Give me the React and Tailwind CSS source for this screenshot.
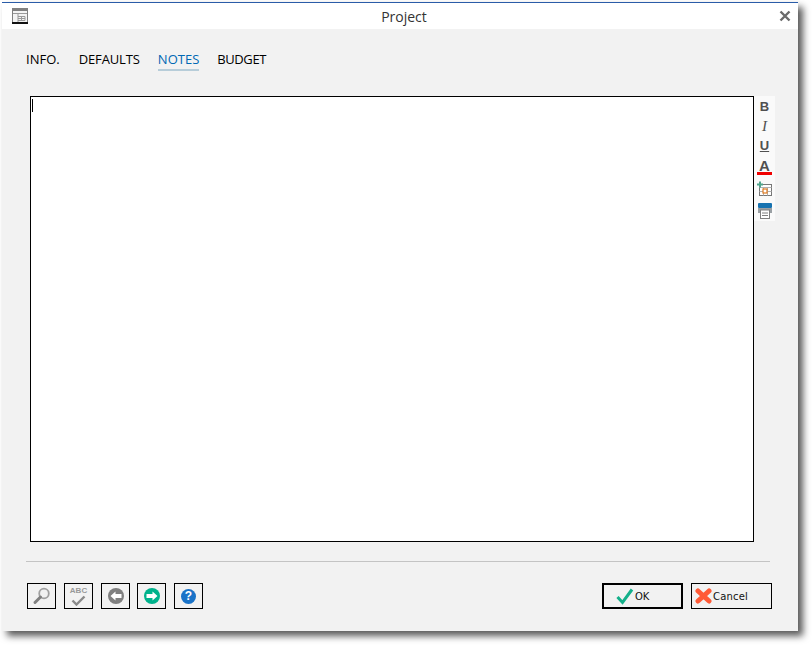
import React from "react";

const tabs = [
  { label: "INFO.", className: "mr-px" },
  { label: "DEFAULTS", className: "tracking-[-0.12px]" },
  { label: "NOTES", className: "text-[#0068b4] h-[21px] border-b-2 border-[#b7cdd9]" },
  { label: "BUDGET", className: "tracking-[-0.4px]" },
];

const SmallButton = ({ children, className = "" }) => (
  <button className={`w-[29px] h-[26px] border border-black flex items-center justify-center ${className}`}>
    {children}
  </button>
);

const WindowIcon = () => (
  <svg width="16" height="16" viewBox="0 0 16 16" className="block">
    <rect width="16" height="16" fill="#808080" />
    <rect y="14" width="16" height="2" fill="#111" />
    <rect x="1" y="3" width="14" height="11" fill="#f4f4f4" />
    <path d="M1 5.5h14M6 5.5V14M6 8.5h7v4H6M6 10.5h7M9.5 8.5v4" stroke="#9a9a9a" fill="none" />
  </svg>
);

const App = () => {
  return (
    <div className="w-[812px] h-[645px] bg-white pl-[2px] pt-[2px] font-['Open_Sans',sans-serif]">
      <div className="w-[796px] h-[629px] flex flex-col border-t border-[#2a5ca8] shadow-[5px_5px_7px_rgba(0,0,0,0.65)]">
        {/* title bar */}
        <div className="h-[26px] shrink-0 bg-white flex items-center pl-[10px] pr-[7px] relative">
          <WindowIcon />
          <span className="flex-1 text-center text-[14px] text-[#333] pl-[1px]">Project</span>
          <svg width="12" height="12" viewBox="0 0 12 12" className="block">
            <path d="M1.5 1.5l9 9M10.5 1.5l-9 9" stroke="#6b6b6b" strokeWidth="2.4" />
          </svg>
        </div>

        <div className="flex-1 bg-[#f2f2f2] flex flex-col pl-[24px] pr-[26px]">
          {/* tabs */}
          <div className="flex gap-[18px] pt-[21px] h-[67px] text-[13px] leading-[18px] text-black">
            {tabs.map((tab) => (
              <span key={tab.label} className={tab.className}>
                {tab.label}
              </span>
            ))}
          </div>

          {/* notes editor and format toolbar */}
          <div className="flex pl-[4px] h-[446px] -mr-[5px]">
            <div className="w-[724px] shrink-0 bg-white border border-black pl-[1px] pt-[2px]">
              <div className="w-px h-[13px] bg-black" />
            </div>
            <div className="w-[21px] shrink-0 h-[125px] bg-[#fafafa] flex flex-col items-center font-['Liberation_Sans',sans-serif] text-[#505050]">
              <span className="h-[20px] leading-[21px] text-[13px] font-bold">B</span>
              <span className="h-[20px] leading-[21px] text-[15px] italic font-['Liberation_Serif',serif]">I</span>
              <span className="h-[20px] leading-[20px] text-[13px] font-bold underline">U</span>
              <span className="h-[21px] relative leading-[20px] text-[15px] font-bold">
                A
                <span className="absolute left-[-2px] right-[-2px] bottom-[2px] h-[3px] bg-[#f00000]" />
              </span>
              <svg width="16" height="16" viewBox="0 0 16 16" className="block mt-[4px]">
                <rect x="2.5" y="3.5" width="12" height="11" fill="#fff" stroke="#777" />
                <path d="M2.5 6.5h12M6.5 6.5v8M10.5 6.5v8M2.5 10.5h12" stroke="#b0b0b0" />
                <rect x="6" y="8" width="4" height="4" fill="#fff" stroke="#e07b20" strokeWidth="1.2" />
                <path d="M3 0.5v6M0 3.5h6" stroke="#4fa58c" strokeWidth="2" />
              </svg>
              <svg width="16" height="17" viewBox="0 0 16 17" className="block mt-[5px]">
                <rect x="1" y="1" width="14" height="5" rx="1" fill="#1672b0" />
                <rect x="1" y="6" width="14" height="5" fill="#9aa0a4" />
                <rect x="3.5" y="8" width="9" height="8.5" fill="#fff" stroke="#808080" />
                <path d="M5 11h6M5 13.5h6" stroke="#808080" />
              </svg>
            </div>
          </div>

          <div className="h-px bg-[#c4c4c4] mt-[19px] w-[744px]" />

          {/* footer buttons */}
          <div className="flex items-start mt-[21px] pl-px">
            <div className="flex gap-2">
              <SmallButton>
                <svg width="20" height="20" viewBox="0 0 20 20">
                  <circle cx="12" cy="7.5" r="4.8" fill="none" stroke="#a0a0a0" strokeWidth="1.8" />
                  <path d="M8.5 11l-5.5 5.5" stroke="#808080" strokeWidth="3" strokeLinecap="round" />
                </svg>
              </SmallButton>
              <SmallButton>
                <div className="flex flex-col items-center">
                  <span className="text-[8px] leading-[8px] font-bold text-[#999] font-['Liberation_Sans',sans-serif]">ABC</span>
                  <svg width="15" height="11" viewBox="0 0 15 11" className="block">
                    <path d="M1.5 5.5l4 4 8-8" fill="none" stroke="#8a8a8a" strokeWidth="2.4" />
                  </svg>
                </div>
              </SmallButton>
              <SmallButton>
                <svg width="18" height="18" viewBox="0 0 18 18">
                  <circle cx="9" cy="9" r="8" fill="#808080" />
                  <path d="M3.5 9l5-4.5v2.5h6v4h-6v2.5z" fill="#fff" />
                </svg>
              </SmallButton>
              <SmallButton className="-ml-px">
                <svg width="18" height="18" viewBox="0 0 18 18">
                  <circle cx="9" cy="9" r="8" fill="#00b28c" />
                  <path d="M14.5 9l-5-4.5v2.5h-6v4h6v2.5z" fill="#fff" />
                </svg>
              </SmallButton>
              <SmallButton>
                <span className="w-[15px] h-[15px] rounded-full bg-[#1a73c8] text-white text-[12px] leading-[15px] font-bold text-center font-['Liberation_Sans',sans-serif]">?</span>
              </SmallButton>
            </div>

            <div className="flex gap-2 ml-auto font-['DejaVu_Sans',sans-serif] text-[10px] text-[#111]">
              <button className="w-[81px] h-[26px] border-2 border-black flex items-center pl-[12px]">
                <svg width="18" height="17" viewBox="0 0 18 17" className="block">
                  <path d="M1.5 9l5 5.5L16 1.5" fill="none" stroke="#14b08a" strokeWidth="3" />
                </svg>
                <span className="ml-[1px]">OK</span>
              </button>
              <button className="w-[81px] h-[26px] border border-black flex items-center pl-[3px]">
                <svg width="17" height="16" viewBox="0 0 17 16" className="block">
                  <path d="M3 3l11 10M14 3L3 13" stroke="#ff5a36" strokeWidth="5" strokeLinecap="round" />
                </svg>
                <span className="ml-[1px] tracking-[0.2px]">Cancel</span>
              </button>
            </div>
          </div>
        </div>
      </div>
    </div>
  );
};

export default App;
